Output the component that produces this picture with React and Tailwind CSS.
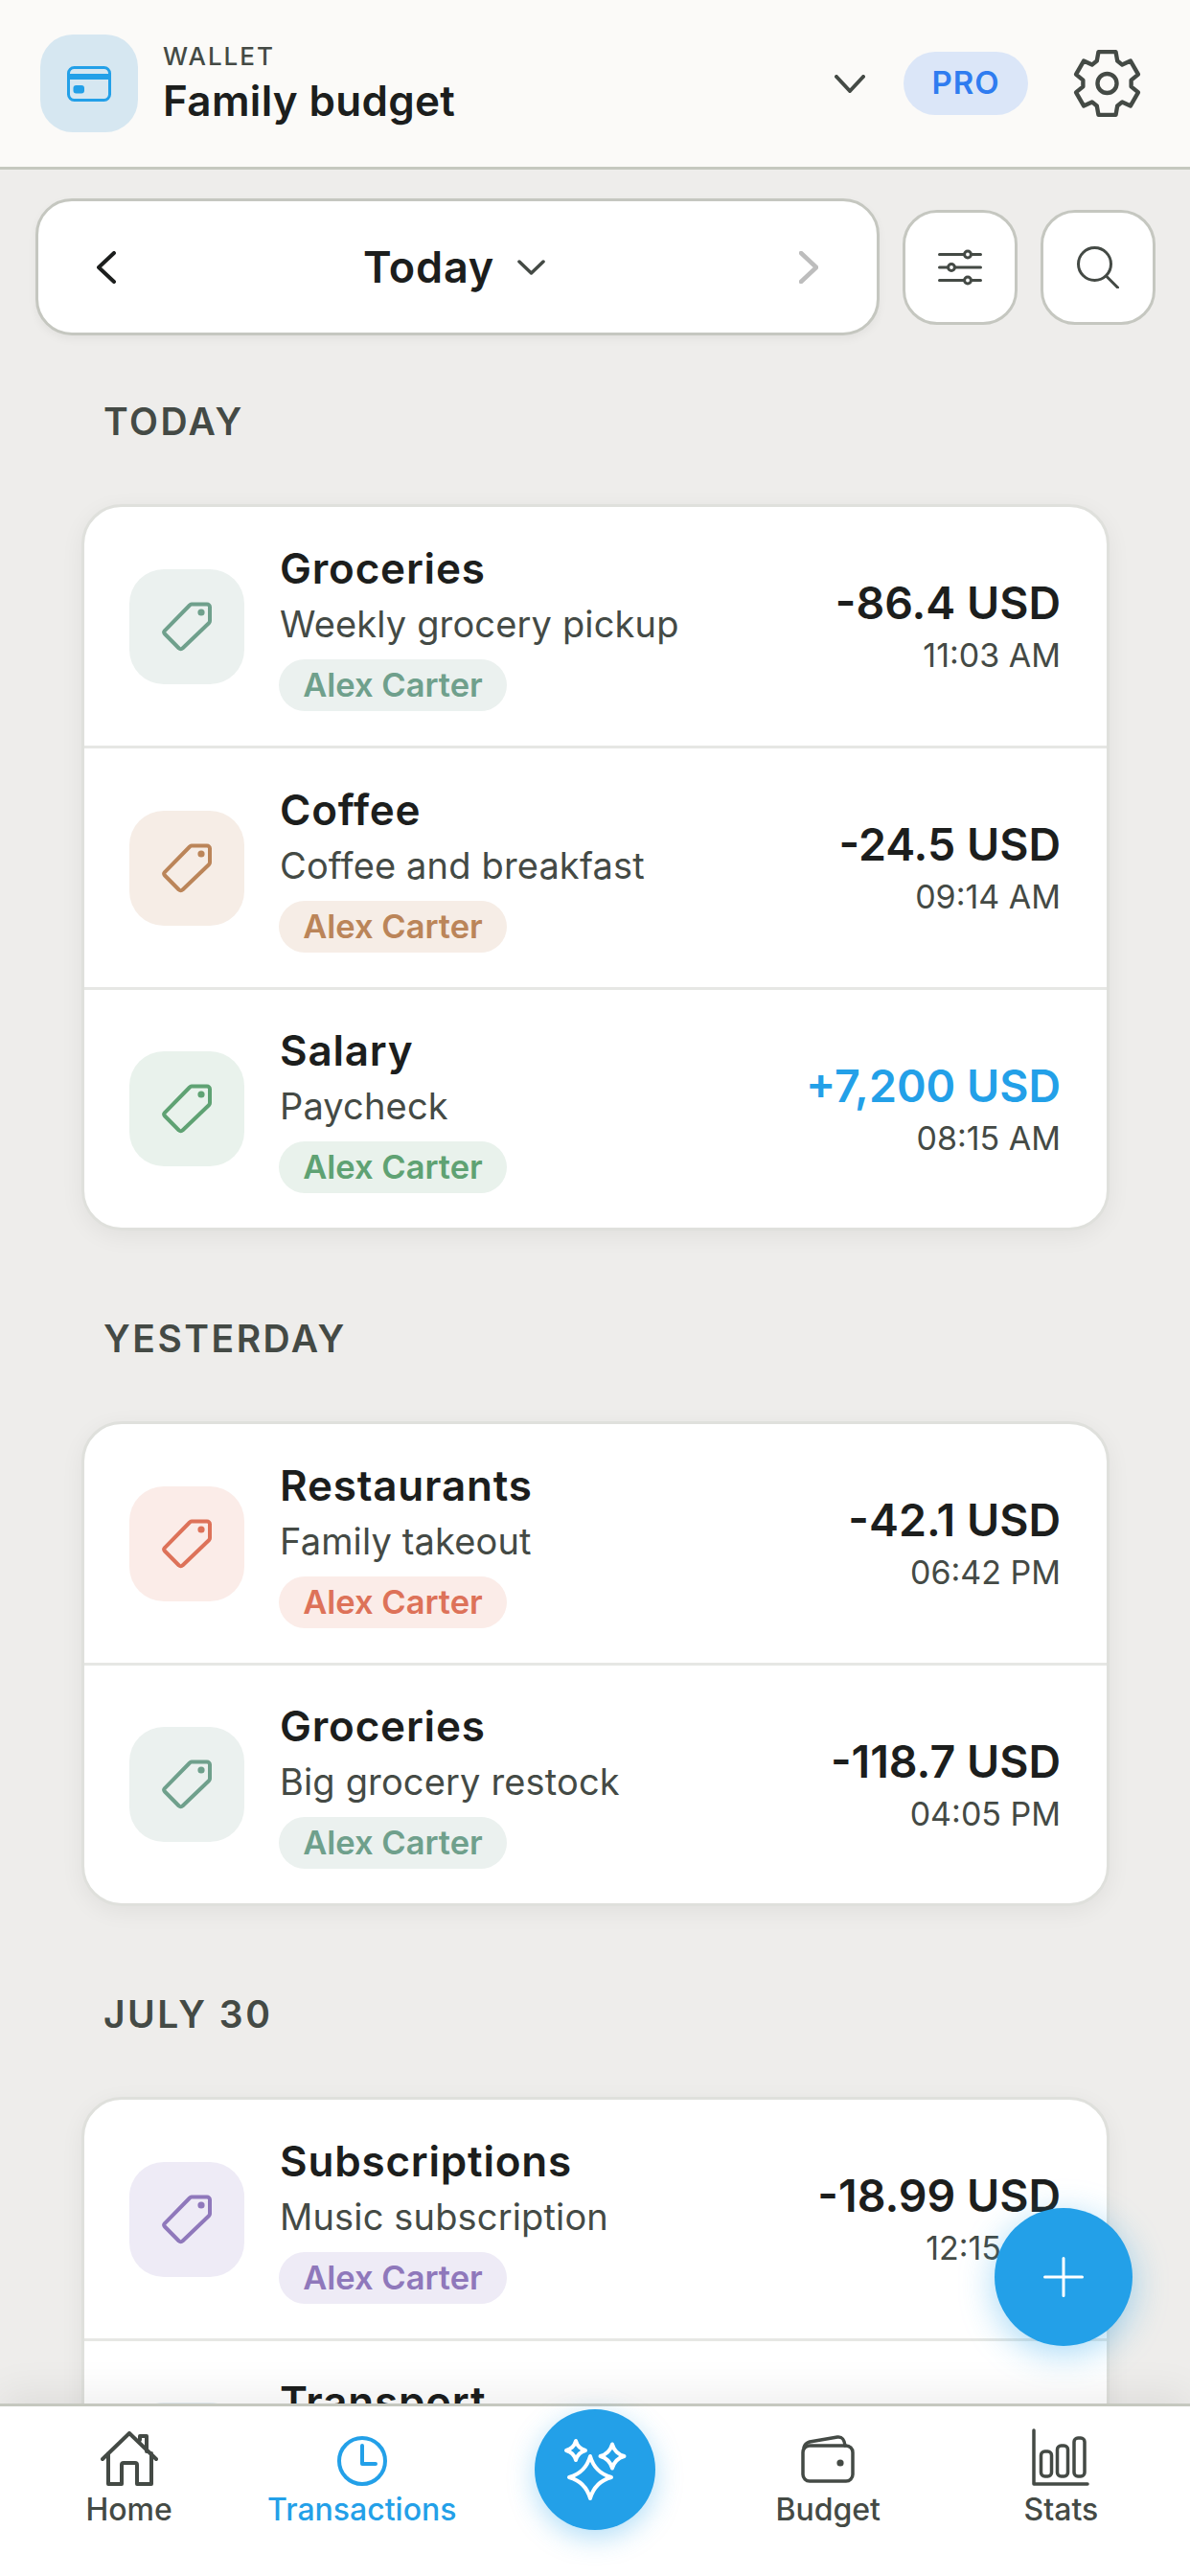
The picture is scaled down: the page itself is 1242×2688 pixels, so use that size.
import React from 'react';

const sections = [
  {
    label: 'TODAY',
    items: [
      { title: 'Groceries', note: 'Weekly grocery pickup', person: 'Alex Carter', amount: '-86.4 USD', time: '11:03 AM', box: 'bg-[#ebf1ef]', tone: 'text-[#6fa08c]' },
      { title: 'Coffee', note: 'Coffee and breakfast', person: 'Alex Carter', amount: '-24.5 USD', time: '09:14 AM', box: 'bg-[#f6ede6]', tone: 'text-[#bb8559]' },
      { title: 'Salary', note: 'Paycheck', person: 'Alex Carter', amount: '+7,200 USD', time: '08:15 AM', box: 'bg-[#e9f2ec]', tone: 'text-[#5fa273]', income: true },
    ],
  },
  {
    label: 'YESTERDAY',
    items: [
      { title: 'Restaurants', note: 'Family takeout', person: 'Alex Carter', amount: '-42.1 USD', time: '06:42 PM', box: 'bg-[#fbece8]', tone: 'text-[#dd7259]' },
      { title: 'Groceries', note: 'Big grocery restock', person: 'Alex Carter', amount: '-118.7 USD', time: '04:05 PM', box: 'bg-[#ebf1ef]', tone: 'text-[#6fa08c]' },
    ],
  },
  {
    label: 'JULY 30',
    items: [
      { title: 'Subscriptions', note: 'Music subscription', person: 'Alex Carter', amount: '-18.99 USD', time: '12:15 PM', box: 'bg-[#eeebf6]', tone: 'text-[#8f78bb]' },
      // only the title of this row is visible above the nav
      { title: 'Transport', box: 'bg-[#e8f0f6]', tone: 'text-[#5b8fb9]' },
    ],
  },
];

const TagIcon = () => (
  <svg width="52" height="52" viewBox="0 0 52 52" fill="none" stroke="currentColor" strokeWidth="4" strokeLinejoin="round">
    <path d="M31 2.500H47a3 3 0 0 1 3 3V20a3 3 0 0 1-.8 2L21.500 48.500a2.500 2.500 0 0 1-3.700 0L3 33.500a2.500 2.500 0 0 1-.1-3.400L29 3.500a3 3 0 0 1 2-1Z" />
    <circle cx="41" cy="11" r="3.600" fill="currentColor" stroke="none" />
  </svg>
);

const Chevron = ({ dir, className, w, h, sw }) => (
  <svg width={w} height={h} viewBox={`0 0 ${w} ${h}`} fill="none" stroke="currentColor" strokeWidth={sw} strokeLinecap="round" strokeLinejoin="round" className={className}>
    {dir === 'left' && <path d={`M${w - 2} 2L2 ${h / 2}L${w - 2} ${h - 2}`} />}
    {dir === 'right' && <path d={`M2 2L${w - 2} ${h / 2}L2 ${h - 2}`} />}
    {dir === 'down' && <path d={`M2 2L${w / 2} ${h - 2}L${w - 2} 2`} />}
  </svg>
);

const Star = ({ cx, cy, r }) => {
  const k = r * 0.22;
  return (
    <path d={`M${cx} ${cy - r}Q${cx + k} ${cy - k} ${cx + r} ${cy}Q${cx + k} ${cy + k} ${cx} ${cy + r}Q${cx - k} ${cy + k} ${cx - r} ${cy}Q${cx - k} ${cy - k} ${cx} ${cy - r}Z`} />
  );
};

const Row = ({ item, last }) => (
  <div className={`flex items-center pl-[47px] pr-[48px] ${last ? 'h-[248px]' : 'h-[252px] border-b-[3px] border-[#e6e7e4]'}`}>
    <div className={`flex h-[120px] w-[120px] shrink-0 items-center justify-center rounded-[36px] ${item.box} ${item.tone}`}>
      <TagIcon />
    </div>
    <div className="ml-[37px] min-w-0 flex-1">
      <div className="text-[44px] font-semibold leading-[54px] tracking-[0.8px] text-[#1c1e1d]">{item.title}</div>
      <div className="mt-[8px] h-[46px] text-[38px] leading-[46px] tracking-[0.15px] text-[#444a45]">{item.note}</div>
      <div className={`-ml-[1px] mt-[14px] flex h-[54px] w-[238px] items-center justify-center rounded-full text-[34.500px] font-semibold ${item.box} ${item.tone}`}>
        {item.person}
      </div>
    </div>
    <div className="text-right">
      <div className={`h-[56px] text-[46.500px] font-semibold leading-[56px] ${item.income ? 'text-[#23a0e8]' : 'text-[#1c1e1d]'}`}>{item.amount}</div>
      <div className="mt-[5px] h-[44px] text-[34px] leading-[44px] text-[#444a45]">{item.time}</div>
    </div>
  </div>
);

const NavItem = ({ label, active, children }) => (
  <div className={`flex flex-col items-center ${active ? 'text-[#23a0e8]' : 'text-[#444a45]'}`}>
    <div className="flex h-[62px] items-end">{children}</div>
    <div className="mt-[5px] text-[32px] font-medium leading-[40px]">{label}</div>
  </div>
);

const App = () => {
  return (
    <div className="relative flex h-[2688px] w-[1242px] flex-col overflow-hidden bg-[#eeedeb] font-['Inter',sans-serif]">
      <header className="flex h-[177px] shrink-0 items-center border-b-[3px] border-[#c5c8bf] bg-[#fbfaf8] pl-[42px] pr-[50px]">
        <div className="flex h-[102px] w-[102px] items-center justify-center rounded-[34px] bg-[#d6e7f1] text-[#23a0e8]">
          <svg width="46" height="37" viewBox="0 0 46 37" fill="none">
            <rect x="1.500" y="1.500" width="43" height="34" rx="6" stroke="currentColor" strokeWidth="3" />
            <rect x="2" y="8" width="42" height="6" fill="currentColor" />
            <rect x="6.500" y="20" width="11.500" height="8.500" rx="3" fill="currentColor" />
          </svg>
        </div>
        <div className="ml-[26px] flex-1">
          <div className="text-[26px] font-medium leading-[32px] tracking-[2px] text-[#444a45]">WALLET</div>
          <div className="mt-[4px] text-[44px] font-semibold leading-[52px] tracking-[0.3px] text-[#1c1e1d]">Family budget</div>
        </div>
        <Chevron dir="down" w={32} h={19} sw={4} className="text-[#444a45]" />
        <div className="ml-[40px] flex h-[66px] w-[130px] items-center justify-center rounded-full bg-[#dbe6f8] text-[33px] font-semibold tracking-[1px] text-[#2f7cf0]">
          PRO
        </div>
        <svg width="73" height="74" viewBox="56 30 218 220" fill="none" stroke="#444a45" strokeWidth="13" strokeLinejoin="round" className="ml-[46px]">
          <path d="M138 42H192L197 70L212 82L238 70L262 112L240 130V150L262 168L238 210L212 198L197 210L192 238H138L133 210L118 198L92 210L68 168L90 150V130L68 112L92 70L118 82L133 70Z" />
          <circle cx="165" cy="140" r="30" />
        </svg>
      </header>

      <main className="min-h-0 flex-1 overflow-hidden">
        <div className="mt-[30px] flex items-center gap-[24px] pl-[37px] pr-[36px]">
          <div className="flex h-[143px] w-[881px] shrink-0 items-center justify-between rounded-[38px] border-[3px] border-[#c5c7c0] bg-white px-[61px] shadow-[0_4px_10px_rgba(0,0,0,0.05)]">
            <Chevron dir="left" w={20} h={34} sw={4} className="text-[#1c1e1d]" />
            <div className="mr-[7px] flex items-center gap-[24px]">
              <span className="text-[45px] font-semibold leading-[56px] tracking-[0.8px] text-[#1c1e1d]">Today</span>
              <Chevron dir="down" w={29} h={16} sw={3.5} className="text-[#444a45]" />
            </div>
            <Chevron dir="right" w={20} h={34} sw={4.5} className="text-[#bdbdbd]" />
          </div>
          <div className="flex h-[120px] w-[120px] shrink-0 items-center justify-center rounded-[36px] border-[3px] border-[#c5c7c0] bg-white">
            <svg width="46" height="38" viewBox="0 0 46 38" fill="#fff" stroke="#444a45" strokeWidth="3" strokeLinecap="round">
              <path d="M1.500 5.500H44.500M1.500 19H44.500M1.500 32.500H44.500" />
              <circle cx="31" cy="5.500" r="3.400" />
              <circle cx="14" cy="19" r="3.400" />
              <circle cx="31" cy="32.500" r="3.400" />
            </svg>
          </div>
          <div className="flex h-[120px] w-[120px] shrink-0 items-center justify-center rounded-[36px] border-[3px] border-[#c5c7c0] bg-white">
            <svg width="44" height="44" viewBox="0 0 44 44" fill="none" stroke="#444a45" strokeWidth="3" strokeLinecap="round">
              <circle cx="18.500" cy="18.500" r="17" />
              <path d="M30.500 31L42.500 43" />
            </svg>
          </div>
        </div>

        {sections.map((section, i) => (
          <section key={section.label} className={i === 0 ? 'mt-[67px]' : 'mt-[90px]'}>
            <h2 className="ml-[108px] text-[39px] font-semibold leading-[46px] tracking-[2.5px] text-[#444a45]">{section.label}</h2>
            <div className="ml-[85px] mr-[84px] mt-[63px] overflow-hidden rounded-[42px] border-[3px] border-[#dfe0dc] bg-white shadow-[0_6px_24px_rgba(0,0,0,0.06)]">
              {section.items.map((item, j) => (
                <Row key={item.title + j} item={item} last={j === section.items.length - 1} />
              ))}
            </div>
          </section>
        ))}
      </main>

      <nav className="relative z-10 grid h-[180px] shrink-0 grid-cols-5 border-t-[3px] border-[#c5c8bf] bg-white px-[13px] pt-[21px] shadow-[0_-10px_40px_rgba(0,0,0,0.07)]">
        <NavItem label="Home">
          <svg width="60" height="57" viewBox="0 0 60 57" fill="none" stroke="currentColor" strokeWidth="4" strokeLinecap="round" strokeLinejoin="round">
            <path d="M2 29L30 2L58 29M8 23V55H22V35a2 2 0 0 1 2-2H36a2 2 0 0 1 2 2V55H53V23M41 9V5H48V21" />
          </svg>
        </NavItem>
        <NavItem label="Transactions" active>
          <svg width="52" height="52" viewBox="0 0 52 52" fill="none" stroke="currentColor" strokeWidth="4" strokeLinecap="round" strokeLinejoin="round">
            <circle cx="26" cy="26" r="24" />
            <path d="M26 10V29H40" />
          </svg>
        </NavItem>
        <div className="flex justify-center">
          <div className="-mt-[18px] flex h-[126px] w-[126px] items-center justify-center rounded-full bg-[#23a0e8] shadow-[0_8px_28px_rgba(35,160,232,0.35)]">
            <svg width="80" height="80" viewBox="0 0 80 80" fill="none" stroke="#fff" strokeWidth="4" strokeLinejoin="round">
              <Star cx={35} cy={48} r={22} />
              <Star cx={20} cy={20} r={10} />
              <Star cx={58} cy={26} r={12.500} />
            </svg>
          </div>
        </div>
        <NavItem label="Budget">
          <svg width="56" height="50" viewBox="0 0 56 50" fill="none" stroke="currentColor" strokeWidth="3.500" strokeLinecap="round" strokeLinejoin="round" className="mb-[3px]">
            <rect x="2" y="11" width="52" height="37" rx="7" />
            <path d="M3 13C4 9 6 8 9 7L38 2C42 1.500 45 3 46 11" />
            <circle cx="41" cy="29" r="3.600" fill="currentColor" stroke="none" />
          </svg>
        </NavItem>
        <NavItem label="Stats">
          <svg width="60" height="60" viewBox="0 0 60 60" fill="none" stroke="currentColor" strokeWidth="3.500" strokeLinecap="round" strokeLinejoin="round">
            <path d="M2 2V58H58" />
            <rect x="9.500" y="24" width="11" height="26" rx="4" />
            <rect x="26.500" y="18" width="11" height="32" rx="4" />
            <rect x="44" y="10" width="11" height="40" rx="4" />
          </svg>
        </NavItem>
      </nav>

      <button className="absolute left-[1038px] top-[2304px] z-20 flex h-[144px] w-[144px] items-center justify-center rounded-full bg-[#23a0e8] shadow-[0_8px_36px_rgba(35,160,232,0.4)]">
        <svg width="42" height="42" viewBox="0 0 42 42" fill="none" stroke="#fff" strokeWidth="3" strokeLinecap="round">
          <path d="M21 1.500V40.500M1.500 21H40.500" />
        </svg>
      </button>
    </div>
  );
};

export default App;
